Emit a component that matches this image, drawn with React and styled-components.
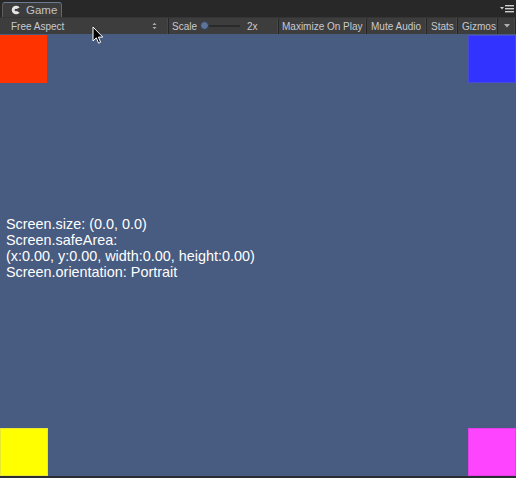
import React from 'react'
import styled, { createGlobalStyle } from 'styled-components'

const GlobalStyle = createGlobalStyle`
    html, body {
        margin: 0;
        padding: 0;
        background: #2b2d33;
    }
    body {
        font-family: "Liberation Sans", Arial, sans-serif;
    }
`

const Window = styled.div`
    position: relative;
    display: flex;
    flex-direction: column;
    width: 516px;
    height: 478px;
    overflow: hidden;
`

const TabBar = styled.div`
    display: flex;
    flex-direction: row;
    align-items: flex-end;
    justify-content: space-between;
    height: 17px;
    padding-left: 2px;
    background: #282828;
    box-sizing: border-box;
`

const Tab = styled.div`
    display: flex;
    align-items: center;
    gap: 5px;
    width: 60px;
    height: 15px;
    padding-left: 8px;
    box-sizing: border-box;
    background: #3c3c3c;
    border: 1px solid #5d5d5d;
    border-top-color: #6d7b94;
    border-right-color: #56698c;
    border-bottom: none;
    border-radius: 3px 3px 0 0;
    color: #c2c2c2;
    font-size: 11.5px;
`

const TabMenu = styled.div`
    display: flex;
    align-items: center;
    height: 17px;
    padding-right: 2px;
`

const Toolbar = styled.div`
    display: flex;
    flex-direction: row;
    align-items: center;
    height: 17px;
    background: #3d3d3d;
    border-top: 1px solid #353535;
    box-sizing: border-box;
    color: #c8cacf;
    font-size: 10px;
`

const Item = styled.div`
    display: flex;
    align-items: center;
    height: 100%;
    width: ${p => p.$w}px;
    padding: 0 ${p => p.$pad ?? 5}px;
    box-sizing: border-box;
    border-right: 1px solid #262626;
    box-shadow: inset -1px 0 0 #474747;
    justify-content: ${p => p.$justify || 'flex-start'};
    white-space: nowrap;
`

const Track = styled.div`
    position: relative;
    width: 38px;
    height: 2px;
    margin-left: 5px;
    background: #2a2a2a;
    border-radius: 1px;
`

const Knob = styled.div`
    position: absolute;
    left: -2px;
    top: -4px;
    width: 9px;
    height: 9px;
    border-radius: 50%;
    background: #5e7397;
    border: 1px solid #2f3a4e;
    box-sizing: border-box;
`

const ScaleValue = styled.span`
    margin-left: 7px;
`

const GameView = styled.div`
    flex: 1;
    display: flex;
    flex-direction: column;
    background: #485b80;
    padding-top: 1px;
`

const CornerRow = styled.div`
    display: flex;
    flex-direction: row;
    justify-content: space-between;
    height: 48px;
`

const Square = styled.div`
    width: ${p => p.$w || 48}px;
    height: 48px;
    background: ${p => p.$color};
    box-sizing: border-box;
    border: 1px solid ${p => p.$edge || p.$color};
`

const Center = styled.div`
    flex: 1;
    display: flex;
    flex-direction: column;
    justify-content: center;
    padding: 0 0 15px 6px;
`

const InfoLine = styled.div`
    color: #ffffff;
    font-size: 14.4px;
    line-height: 16px;
`

const BottomEdge = styled.div`
    height: 2px;
    background: #2b2d33;
`

const Cursor = styled.svg`
    position: absolute;
    left: 92px;
    top: 26px;
`

function GameIcon() {
    return (
        <svg width="10" height="10" viewBox="0 0 10 10">
            <path d="M8.6 2.6 A4.3 4.3 0 1 0 8.6 7.4 L5.6 5.9 A1.2 1.2 0 1 1 5.6 4.1 Z" fill="#e6e6e6" />
        </svg>
    )
}

function Arrows() {
    return (
        <svg width="5" height="8" viewBox="0 0 5 8">
            <path d="M0.5 3 L2.5 0.8 L4.5 3 Z M0.5 5 L2.5 7.2 L4.5 5 Z" fill="#a8a8a8" />
        </svg>
    )
}

export default function App() {
    const lines = [
        'Screen.size: (0.0, 0.0)',
        'Screen.safeArea:',
        '(x:0.00, y:0.00, width:0.00, height:0.00)',
        'Screen.orientation: Portrait',
    ]

    return (
        <>
            <GlobalStyle />
            <Window>
                <TabBar>
                    <Tab>
                        <GameIcon />
                        <span>Game</span>
                    </Tab>
                    <TabMenu>
                        <svg width="14" height="10" viewBox="0 0 14 10">
                            <path d="M0 3 L4 3 L2 5.5 Z" fill="#cfcfcf" />
                            <rect x="5" y="1" width="9" height="1.4" fill="#cfcfcf" />
                            <rect x="5" y="4" width="9" height="1.4" fill="#cfcfcf" />
                            <rect x="5" y="7" width="9" height="1.4" fill="#cfcfcf" />
                        </svg>
                    </TabMenu>
                </TabBar>

                <Toolbar>
                    <Item $w={169} $pad={11} $justify="space-between">
                        <span>Free Aspect</span>
                        <Arrows />
                    </Item>
                    <Item $w={110} $pad={3}>
                        <span>Scale</span>
                        <Track><Knob /></Track>
                        <ScaleValue>2x</ScaleValue>
                    </Item>
                    <Item $w={88} $pad={3}>Maximize On Play</Item>
                    <Item $w={60} $pad={4}>Mute Audio</Item>
                    <Item $w={31} $pad={4}>Stats</Item>
                    <Item $w={40} $pad={4}>Gizmos</Item>
                    <Item $w={18} $pad={0} $justify="center">
                        <svg width="6" height="4" viewBox="0 0 6 4">
                            <path d="M0 0 L6 0 L3 3.5 Z" fill="#b0b0b0" />
                        </svg>
                    </Item>
                </Toolbar>

                <GameView>
                    <CornerRow>
                        <Square $color="#ff3300" $w={47} />
                        <Square $color="#3333ff" $edge="#4a4ad8" />
                    </CornerRow>
                    <Center>
                        {lines.map(line => (
                            <InfoLine key={line}>{line}</InfoLine>
                        ))}
                    </Center>
                    <CornerRow>
                        <Square $color="#ffff00" $edge="#e8e830" />
                        <Square $color="#ff44ff" $edge="#e040e6" />
                    </CornerRow>
                </GameView>
                <BottomEdge />

                <Cursor width="12" height="19" viewBox="0 0 12 19">
                    <path d="M1 1 L1 15 L4.3 11.8 L6.6 17.2 L8.6 16.3 L6.4 11.1 L10.8 11.1 Z" fill="#000" stroke="#fff" strokeWidth="1" strokeLinejoin="round" />
                </Cursor>
            </Window>
        </>
    )
}
